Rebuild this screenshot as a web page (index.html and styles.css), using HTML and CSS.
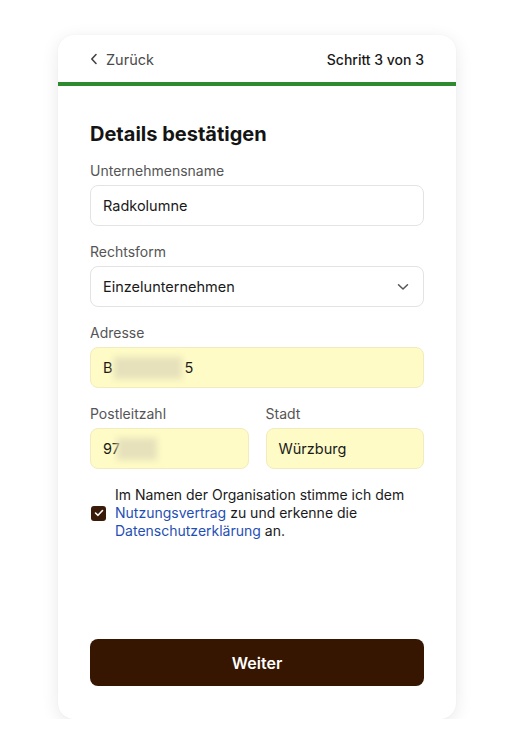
FILE: index.html
```html
<!DOCTYPE html>
<html lang="de">
<head>
<meta charset="utf-8">
<link rel="stylesheet" href="styles.css">
</head>
<body>
<div class="card">
  <div class="header">
    <a class="back">
      <svg width="8" height="12" viewBox="0 0 8 12"><path d="M6 1.5 L1.8 6 L6 10.5" fill="none" stroke="#444" stroke-width="1.6" stroke-linecap="round" stroke-linejoin="round"/></svg>
      <span>Zurück</span>
    </a>
    <span class="step">Schritt 3 von 3</span>
  </div>
  <div class="progress"></div>
  <div class="content">
    <h1 class="title">Details bestätigen</h1>
    <div class="field">
      <label class="label">Unternehmensname</label>
      <div class="input">Radkolumne</div>
    </div>
    <div class="field">
      <label class="label">Rechtsform</label>
      <div class="input select">
        <span>Einzelunternehmen</span>
        <svg width="12" height="8" viewBox="0 0 12 8"><path d="M1.5 1.8 L6 6 L10.5 1.8" fill="none" stroke="#555" stroke-width="1.5" stroke-linecap="round" stroke-linejoin="round"/></svg>
      </div>
    </div>
    <div class="field">
      <label class="label">Adresse</label>
      <div class="input filled">B<span class="blur wide"></span>5</div>
    </div>
    <div class="row">
      <div class="field">
        <label class="label">Postleitzahl</label>
        <div class="input filled">97<span class="blur short"></span></div>
      </div>
      <div class="field">
        <label class="label">Stadt</label>
        <div class="input filled">Würzburg</div>
      </div>
    </div>
    <div class="consent">
      <span class="checkbox">
        <svg width="10" height="8" viewBox="0 0 10 8"><path d="M1.5 4 L4 6.3 L8.5 1.5" fill="none" stroke="#fff" stroke-width="1.6" stroke-linecap="round" stroke-linejoin="round"/></svg>
      </span>
      <p class="consent-text">Im Namen der Organisation stimme ich dem <a class="link">Nutzungsvertrag</a> zu und erkenne die <a class="link">Datenschutzerklärung</a> an.</p>
    </div>
    <button class="submit">Weiter</button>
  </div>
</div>
</body>
</html>
```
FILE: styles.css
```css
* { box-sizing: border-box; }
html, body { margin: 0; padding: 0; background: #ffffff; }
body {
  font-family: Inter, "Liberation Sans", sans-serif;
  color: #1a1a1a;
  padding-top: 35px;
}
.card {
  width: 398px;
  height: 684px;
  margin-left: 58px;
  background: #fff;
  border-radius: 16px;
  box-shadow: 0 4px 18px rgba(0,0,0,0.09), 0 0 2px rgba(0,0,0,0.04);
  display: flex;
  flex-direction: column;
  overflow: hidden;
}
.header {
  height: 47px;
  padding: 0 32px;
  display: flex;
  align-items: center;
  justify-content: space-between;
  font-size: 14px;
  padding-top: 1px;
}
.back {
  display: flex;
  align-items: center;
  gap: 8px;
  color: #4a4a4a;
  font-size: 14.5px;
}
.step {
  color: #1a1a1a;
  font-weight: 500;
  font-size: 14px;
}
.progress {
  height: 4px;
  background: #2f8a2f;
}
.content {
  flex: 1;
  padding: 34px 32px 33px;
  display: flex;
  flex-direction: column;
}
.title {
  margin: 0 0 13px;
  font-size: 20px;
  line-height: 28px;
  font-weight: 700;
  color: #141414;
}
.field {
  display: flex;
  flex-direction: column;
  gap: 4px;
  margin-bottom: 16px;
}
.label {
  font-size: 14px;
  line-height: 20px;
  color: #555;
}
.input {
  height: 41px;
  border: 1px solid #e3e3e3;
  border-radius: 8px;
  padding: 0 12px;
  display: flex;
  align-items: center;
  font-size: 14.5px;
  color: #1a1a1a;
  background: #fff;
}
.select { justify-content: space-between; padding-right: 14px; }
.filled {
  background: #fefbc6;
  border-color: #f1ecbd;
}
.blur {
  display: inline-block;
  height: 22px;
  background: #e6e1bb;
  filter: blur(3px);
}
.blur.wide { width: 68px; margin: 0 3px 0 1px; }
.blur.short { width: 40px; margin-left: -3px; }
.row {
  display: grid;
  grid-template-columns: 1fr 1fr;
  gap: 17px;
}
.consent {
  display: flex;
  align-items: center;
  gap: 9px;
  margin-top: 1px;
}
.checkbox {
  width: 15px;
  height: 15px;
  border-radius: 3px;
  background: #3a1a08;
  display: flex;
  align-items: center;
  justify-content: center;
  flex: none;
  margin-left: 1px;
}
.consent-text {
  margin: 0;
  font-size: 14px;
  line-height: 18px;
  color: #1a1a1a;
}
.link { color: #1f4fb5; }
.submit {
  margin-top: auto;
  height: 47px;
  border: none;
  border-radius: 8px;
  background: #361600;
  color: #fff;
  font-family: inherit;
  font-size: 16px;
  font-weight: 600;
}
```
